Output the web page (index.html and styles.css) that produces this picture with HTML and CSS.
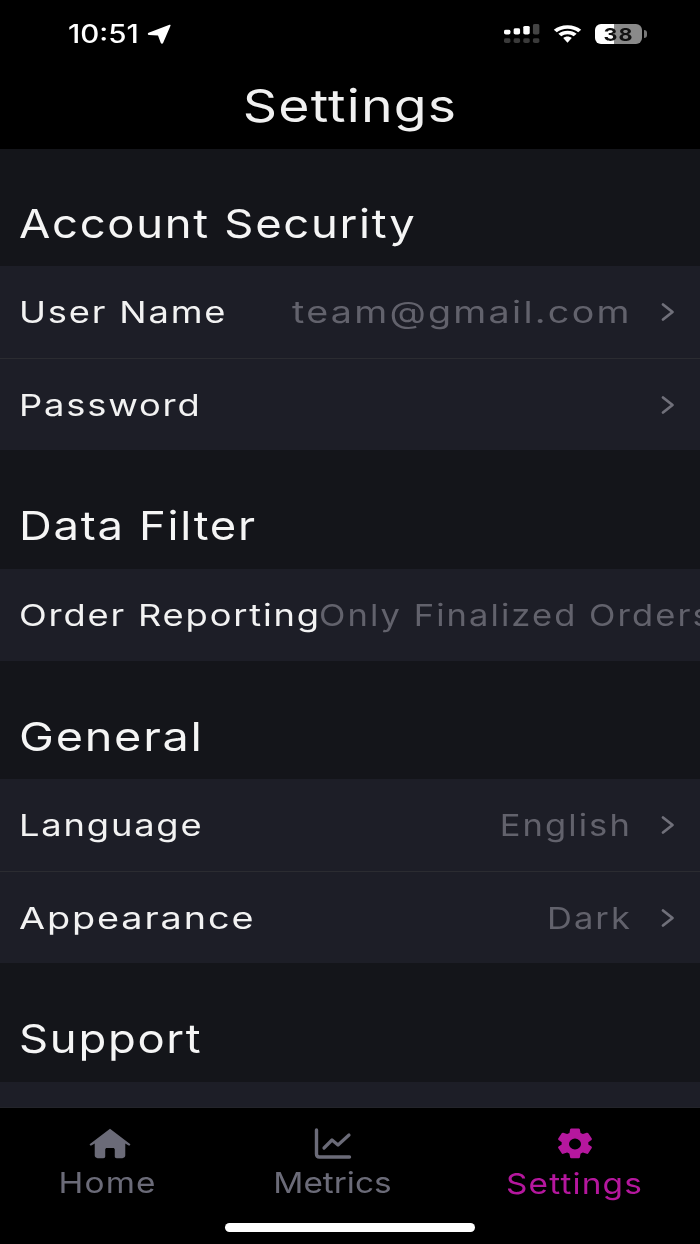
FILE: index.html
```html
<!DOCTYPE html>
<html lang="en">
<head>
<meta charset="utf-8">
<title>Settings</title>
<link rel="stylesheet" href="styles.css">
</head>
<body>
<div class="phone">
  <header class="top">
    <div class="status">
      <div class="status-left">
        <span class="time">10:51</span>
        <svg class="loc" viewBox="0 0 24 20" width="24" height="20" preserveAspectRatio="none"><path d="M22.500.8 1.600 8.800c-1.200.5-1 2.200.4 2.300l9 .4 2.700 7.300c.5 1.200 2 1.200 2.500 0l7.300-17c.4-.9-.6-1.400-1-1z" fill="#fff"/></svg>
      </div>
      <div class="status-right">
        <svg class="signal" viewBox="0 0 28 21" width="36" height="20" preserveAspectRatio="none">
          <g fill="#fff"><rect x="0" y="6" width="5" height="5" rx="1.500"/><rect x="7.500" y="4.500" width="5" height="6.500" rx="1.500"/><rect x="15" y="2" width="5" height="9" rx="1.500"/></g>
          <rect x="22.500" y="0" width="5" height="11" rx="1.500" fill="#444"/>
          <g fill="#3a3a3a"><rect x="0" y="15" width="5" height="5" rx="1.500"/><rect x="7.500" y="15" width="5" height="5" rx="1.500"/><rect x="15" y="15" width="5" height="5" rx="1.500"/><rect x="22.500" y="15" width="5" height="5" rx="1.500"/></g>
        </svg>
        <svg class="wifi" viewBox="0 0 24 16.500" width="31" height="18" preserveAspectRatio="none">
          <path d="M12 3.400c3.200 0 6.100 1.200 8.300 3.300L22.600 4.400A15 15 0 0 0 12 .2 15 15 0 0 0 1.400 4.400l2.300 2.300A12.200 12.200 0 0 1 12 3.400z" fill="#fff"/>
          <path d="M12 8.500c1.800 0 3.500.7 4.800 1.900l2.300-2.300A10 10 0 0 0 12 5.300c-2.700 0-5.200 1-7.100 2.800l2.300 2.300C8.500 9.200 10.200 8.500 12 8.500z" fill="#fff"/>
          <path d="M12 10.600c-1.200 0-2.400.5-3.300 1.300L12 16.200l3.300-4.300c-.9-.8-2.100-1.300-3.300-1.300z" fill="#fff"/>
        </svg>
        <div class="battery"><span class="battery-num">38</span></div>
        <span class="battery-cap"></span>
      </div>
    </div>
    <h1 class="title">Settings</h1>
  </header>

  <main class="list">
    <h2 class="section">Account Security</h2>
    <div class="row">
      <span class="label">User Name</span>
      <span class="value value-wide">team@gmail.com</span>
      <svg class="chev" viewBox="0 0 14 20" width="14" height="20"><path d="M2 2.500 11.500 10 2 17.500" fill="none" stroke="#70707a" stroke-width="2.800" stroke-linecap="round" stroke-linejoin="round"/></svg>
    </div>
    <div class="row">
      <span class="label">Password</span>
      <svg class="chev" viewBox="0 0 14 20" width="14" height="20"><path d="M2 2.500 11.500 10 2 17.500" fill="none" stroke="#70707a" stroke-width="2.800" stroke-linecap="round" stroke-linejoin="round"/></svg>
    </div>

    <h2 class="section">Data Filter</h2>
    <div class="row row-clip">
      <span class="label">Order Reporting</span>
      <span class="value value-clip">Only Finalized Orders</span>
    </div>

    <h2 class="section section-wide">General</h2>
    <div class="row">
      <span class="label">Language</span>
      <span class="value">English</span>
      <svg class="chev" viewBox="0 0 14 20" width="14" height="20"><path d="M2 2.500 11.500 10 2 17.500" fill="none" stroke="#70707a" stroke-width="2.800" stroke-linecap="round" stroke-linejoin="round"/></svg>
    </div>
    <div class="row">
      <span class="label label-wide">Appearance</span>
      <span class="value">Dark</span>
      <svg class="chev" viewBox="0 0 14 20" width="14" height="20"><path d="M2 2.500 11.500 10 2 17.500" fill="none" stroke="#70707a" stroke-width="2.800" stroke-linecap="round" stroke-linejoin="round"/></svg>
    </div>

    <h2 class="section">Support</h2>
    <div class="row"></div>
  </main>

  <nav class="tabs">
    <div class="tab tab-home">
      <svg class="icon-home" viewBox="0 0 44 36" width="42" height="31" preserveAspectRatio="none"><path d="M22 1 43 18.500c.8 1-.2 2.200-1.500 1.800L38 18v14c0 1.600-1.200 3-3 3h-6c-1.200 0-2-.8-2-2v-8c0-1-.8-1.800-1.800-1.800h-6.400c-1 0-1.800.8-1.800 1.800v8c0 1.200-.8 2-2 2H9c-1.800 0-3-1.400-3-3V18l-3.500 2.300C1.200 20.700.2 19.500 1 18.500z" fill="#6b6b78"/></svg>
      <span class="tab-label">Home</span>
    </div>
    <div class="tab tab-metrics">
      <svg viewBox="0 0 38 32" width="38" height="32"><path d="M2.500 2v24c0 2 1 3 3 3h30" fill="none" stroke="#6b6b78" stroke-width="3.400" stroke-linecap="round"/><path d="M10 20l8-8 6 5 11-10" fill="none" stroke="#6b6b78" stroke-width="3.200" stroke-linecap="round" stroke-linejoin="round"/></svg>
      <span class="tab-label">Metrics</span>
    </div>
    <div class="tab tab-settings tab-active">
      <svg viewBox="0 0 24 24" width="38" height="34" preserveAspectRatio="none"><path fill="#b5179e" fill-rule="evenodd" d="M14.200 1c.4 0 .8.300.9.700l.4 2.500c.5.200 1 .500 1.500.800l2.400-.9c.4-.2.800 0 1 .3l2.200 3.700c.2.400.1.800-.2 1.100l-2 1.500a7 7 0 0 1 0 1.600l2 1.500c.3.300.4.700.2 1.100l-2.200 3.700c-.2.300-.6.500-1 .3l-2.400-.9c-.5.300-1 .6-1.500.8l-.4 2.500c-.1.400-.5.700-.9.700H9.800c-.4 0-.8-.3-.9-.7l-.4-2.500c-.5-.2-1-.5-1.500-.8l-2.400.9c-.4.200-.8 0-1-.3l-2.200-3.700c-.2-.4-.1-.8.200-1.100l2-1.500a7 7 0 0 1 0-1.600l-2-1.500c-.3-.3-.4-.7-.2-1.100l2.200-3.700c.2-.3.600-.5 1-.3l2.400.9c.5-.3 1-.6 1.500-.8l.4-2.500c.1-.4.500-.7.900-.7zM12 8.200a3.800 3.800 0 1 0 0 7.600 3.800 3.800 0 0 0 0-7.600z"/></svg>
      <span class="tab-label">Settings</span>
    </div>
    <div class="home-bar"></div>
  </nav>
</div>
</body>
</html>
```

FILE: styles.css
```css
* { box-sizing: border-box; }
html, body { margin: 0; padding: 0; background: #000; }
body { font-family: "Inter", "Liberation Sans", sans-serif; color: #f2f2f2; }
.phone { width: 700px; height: 1244px; display: flex; flex-direction: column; overflow: hidden; background: #000; }

.top { height: 149px; flex: none; background: #000; }
.status { height: 68px; display: flex; justify-content: space-between; align-items: center; padding: 0 53px 0 68px; }
.status-left { display: flex; align-items: center; gap: 19px; }
.time { font-size: 25px; font-weight: 500; color: #fff; transform: scaleX(1.18); transform-origin: left center; will-change: transform; }
.loc { display: block; }
.status-right { display: flex; align-items: center; }
.signal { display: block; margin-right: 12px; }
.wifi { display: block; margin-right: 12px; }
.battery { width: 47px; height: 20px; border-radius: 6px; display: flex; align-items: center; justify-content: center; background: linear-gradient(90deg, #fff 0 40%, #8a8a8a 40% 100%); }
.battery-num { font-size: 18px; font-weight: 700; color: #111; letter-spacing: 1px; transform: scaleX(1.2); will-change: transform; }
.battery-cap { width: 3px; height: 8px; background: #777; margin-left: 2px; border-radius: 0 3px 3px 0; }
.title { margin: 0; text-align: center; font-size: 45px; line-height: 76px; font-weight: 400; letter-spacing: 1px; color: #f0f0f0; transform: scaleX(1.19); will-change: transform; }

.list { flex: 1; min-height: 0; overflow: hidden; background: #14151a; }
.section { margin: 0; height: 117px; padding: 45px 19px 0; font-size: 40px; line-height: 60px; font-weight: 400; letter-spacing: 1.500px; color: #f5f5f5; white-space: nowrap; transform: scaleX(1.135); transform-origin: 19px center; will-change: transform; }
.section-wide { transform: scaleX(1.17); }
.row + .section { height: 118.500px; padding-top: 46px; }
.row { height: 92px; display: flex; align-items: center; padding: 0 25px 0 19px; background: #1d1e27; white-space: nowrap; }
.row + .row { border-top: 1px solid #2b2c31; }
.label { font-size: 30px; font-weight: 400; letter-spacing: 1.500px; color: #f2f2f2; transform: scaleX(1.21); transform-origin: left center; will-change: transform; }
.label-wide { transform: scaleX(1.26); }
.value { margin-left: auto; font-size: 30px; font-weight: 400; letter-spacing: 1.800px; color: #62626c; transform: scaleX(1.15); transform-origin: right center; will-change: transform; }
.value-wide { transform: scaleX(1.255); }
.chev { display: block; flex: none; margin-left: 29px; }
.row .label + .chev { margin-left: auto; }
.row-clip { overflow: hidden; padding-right: 0; }
.value-clip { margin-left: 50px; flex: none; transform-origin: left center; }

.tabs { position: relative; height: 137px; flex: none; display: flex; background: #000; border-top: 1px solid #23242a; }
.tab { position: relative; display: flex; flex-direction: column; align-items: center; color: #6b6b78; }
.tab svg { display: block; }
.tab-home { width: 215px; padding-top: 20px; }
.icon-home { margin-left: 5px; margin-bottom: 1px; }
.tab-metrics { width: 235px; padding-top: 20px; }
.tab-settings { width: 250px; padding-top: 19px; }
.tab-label { font-size: 29px; line-height: 44px; letter-spacing: 1px; white-space: nowrap; transform: scaleX(1.15); margin-top: 1px; will-change: transform; }
.tab-metrics .tab-label { letter-spacing: 0; }
.tab-active { color: #b5179e; }
.home-bar { position: absolute; left: 225px; bottom: 12px; width: 250px; height: 9px; background: #fff; border-radius: 5px; }
```
